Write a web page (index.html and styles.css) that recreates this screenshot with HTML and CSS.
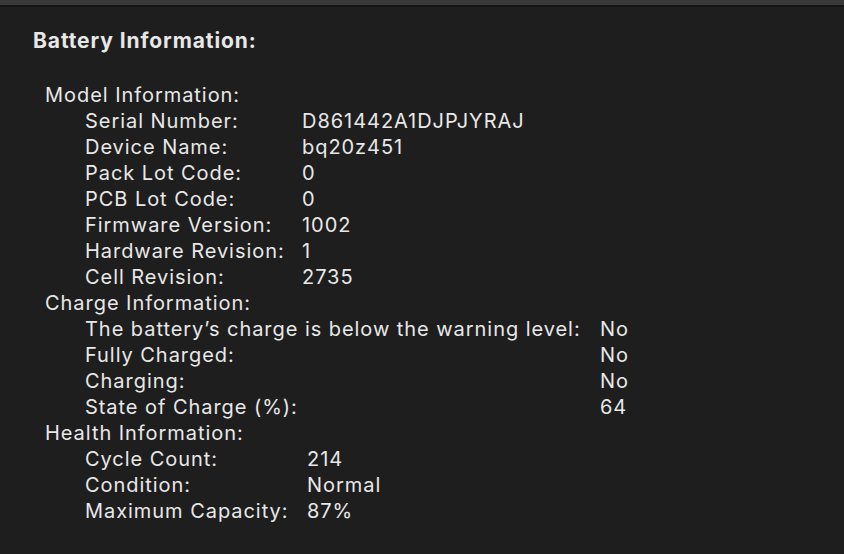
FILE: index.html
```html
<!DOCTYPE html>
<html lang="en">
<head>
    <meta charset="UTF-8">
    <title>Battery Information</title>
    <link rel="stylesheet" href="styles.css">
</head>
<body>
    <div class="titlebar"></div>
    <div class="panel">
        <h1>Battery Information:</h1>

        <div class="section">
            <div class="section-title">Model Information:</div>
            <div class="rows model">
                <span>Serial Number:</span><span>D861442A1DJPJYRAJ</span>
                <span>Device Name:</span><span>bq20z451</span>
                <span>Pack Lot Code:</span><span>0</span>
                <span>PCB Lot Code:</span><span>0</span>
                <span>Firmware Version:</span><span>1002</span>
                <span>Hardware Revision:</span><span>1</span>
                <span>Cell Revision:</span><span>2735</span>
            </div>
        </div>

        <div class="section">
            <div class="section-title">Charge Information:</div>
            <div class="rows charge">
                <span>The battery’s charge is below the warning level:</span><span>No</span>
                <span>Fully Charged:</span><span>No</span>
                <span>Charging:</span><span>No</span>
                <span>State of Charge (%):</span><span>64</span>
            </div>
        </div>

        <div class="section">
            <div class="section-title">Health Information:</div>
            <div class="rows health">
                <span>Cycle Count:</span><span>214</span>
                <span>Condition:</span><span>Normal</span>
                <span>Maximum Capacity:</span><span>87%</span>
            </div>
        </div>
    </div>
</body>
</html>
```

FILE: styles.css
```css
body {
    margin: 0;
    background-color: #1e1e1e;
    font-family: Inter, "Noto Sans", sans-serif;
    color: #e8e8e8;
    height: 554px;
    overflow: hidden;
}
.titlebar {
    height: 5px;
    background-color: #3a3a3a;
    border-bottom: 2px solid #141414;
}
.panel {
    padding: 21px 0 0 33px;
}
h1 {
    margin: 0 0 28px 0;
    font-size: 21px;
    font-weight: 700;
    line-height: 26px;
    letter-spacing: 0.9px;
}
.section {
    margin-left: 12px;
}
.section-title,
.rows {
    font-size: 20px;
    line-height: 26px;
    letter-spacing: 0.95px;
}
.rows {
    display: grid;
    margin-left: 40px;
}
.model {
    grid-template-columns: 217px auto;
}
.charge {
    grid-template-columns: 515px auto;
}
.health {
    grid-template-columns: 222px auto;
}
```
